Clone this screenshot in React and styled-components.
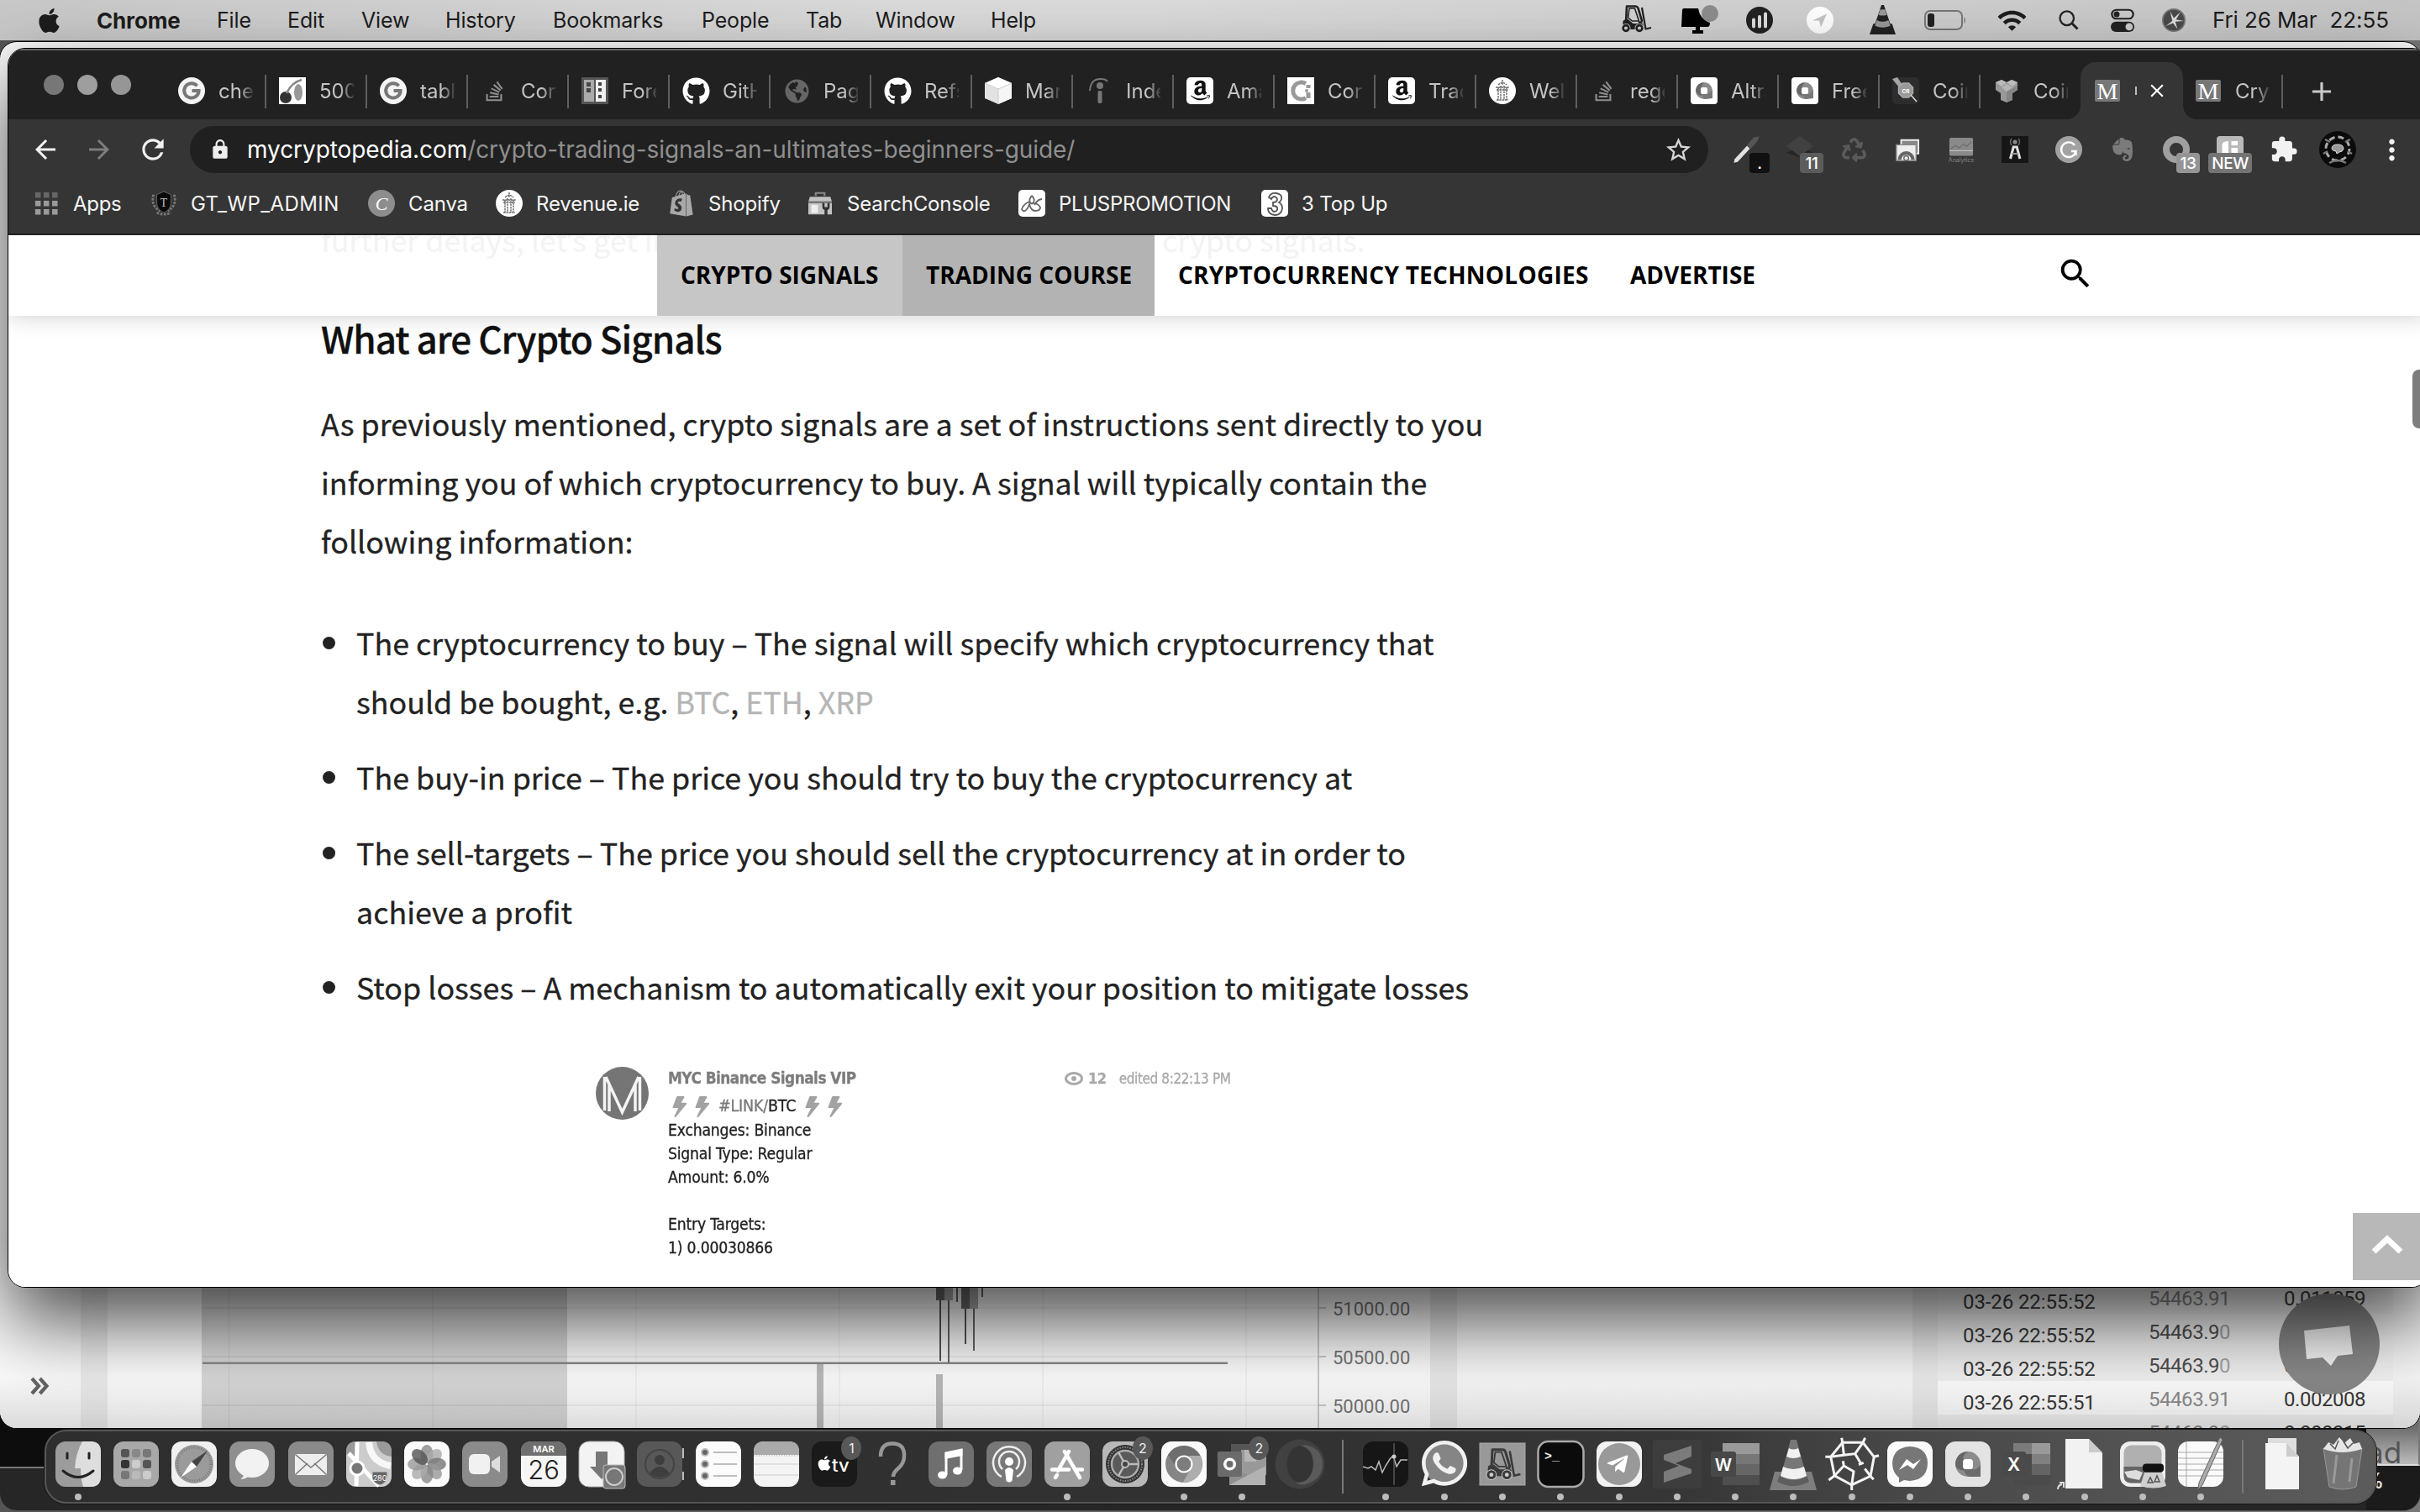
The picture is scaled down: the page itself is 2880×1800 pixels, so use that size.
import React from "react";
import styled, { createGlobalStyle } from "styled-components";
import {
  FaApple, FaGithub, FaAmazon, FaStackOverflow, FaWhatsapp, FaTelegramPlane, FaEvernote,
  FaRecycle, FaShopify, FaGlobeAmericas, FaBolt,
} from "react-icons/fa";
import {
  MdArrowBack, MdArrowForward, MdRefresh, MdLock, MdStarBorder, MdMoreVert, MdClose, MdAdd,
  MdWifi, MdExtension, MdSearch,
} from "react-icons/md";

const UI = `Inter, "Liberation Sans", sans-serif`;
const BODY = `"Noto Sans CJK SC", "Noto Sans", sans-serif`;
const NAV = `"Open Sans", "Noto Sans", sans-serif`;

const Global = createGlobalStyle`
  * { box-sizing: border-box; }
  html, body { margin: 0; background: #111; overflow: hidden; }
  svg { display: block; flex: none; }
`;

const Desktop = styled.div`
  position: relative;
  width: 2880px;
  height: 1800px;
  overflow: hidden;
  background: linear-gradient(90deg, #555 0, #777 100%);
  font-family: ${UI};
`;

/* ---------- menu bar ---------- */
const MenuBar = styled.header`
  display: flex;
  justify-content: space-between;
  align-items: center;
  height: 48px;
  padding: 0 38px 0 42px;
  background: linear-gradient(90deg, #c8c8c8 0, #dadada 38%, #dadada 48%, #cfcfcf 75%, #c5c5c5 100%);
  color: #1d1d1d;
  font-size: 25px;
  letter-spacing: -0.15px;
`;
const MenuGroup = styled.div`
  display: flex;
  align-items: center;
  height: 48px;
`;
const MenuItem = styled.span`
  width: ${(p) => p.$w}px;
  font-weight: ${(p) => (p.$bold ? 700 : 400)};
  font-size: ${(p) => (p.$bold ? 26 : 25)}px;
  white-space: nowrap;
`;
const StatusSlot = styled.span`
  display: flex;
  justify-content: center;
  align-items: center;
  width: ${(p) => p.$w}px;
  color: #1d1d1d;
`;
const Clock = styled.span`
  display: flex;
  gap: 15px;
  margin-left: 20px;
  width: 209px;
  padding-bottom: 2px;
  font-size: 26px;
  letter-spacing: -0.1px;
  white-space: nowrap;
`;

/* ---------- windows ---------- */
const Win = styled.section`
  position: absolute;
  left: ${(p) => p.$x}px;
  top: ${(p) => p.$y}px;
  width: ${(p) => p.$w}px;
  height: ${(p) => p.$h}px;
  border: 1px solid #000;
  border-radius: 21px;
  overflow: hidden;
  display: flex;
  flex-direction: column;
`;
const DeepWin = styled(Win)`
  background: linear-gradient(180deg, #0d0d0d 0, #0d0d0d 98px, #777 98px, #777 100px, #262626 100px);
  border-color: #555;
  align-items: flex-end;
  justify-content: flex-end;
`;
const DeepSide = styled.div`
  width: 64px;
  height: 97px;
  display: flex;
  flex-direction: column;
  justify-content: flex-end;
  padding: 0 0 0 1px;
  background: linear-gradient(180deg, #6b6b6b, #6b6b6b 50px, #bbb);
  color: #555;
  font-size: 35px;
  line-height: 28px;
  border-bottom: 2px solid #ddd;
  border-right: 2px solid #777;
`;
const DeepFoot = styled.div`
  height: 53px;
  width: 64px;
  padding: 5px 0 0 0;
  background: #1b1b1b;
  color: #ddd;
  font-size: 25px;
  font-weight: 600;
  line-height: 26px;
  text-indent: -4px;
`;
const BackWin = styled(Win)`
  background: #fafafa;
  justify-content: flex-end;
`;
const Exchange = styled.div`
  display: flex;
  height: 168px;
`;
const Band = styled.div`
  width: ${(p) => p.$w}px;
  flex: none;
  background: ${(p) => p.$c};
`;
const Rail = styled(Band)`
  padding: 101px 0 0 34px;
`;
const Trades = styled.div`
  width: 542px;
  display: grid;
  grid-auto-rows: 40px;
  font-family: Roboto, sans-serif;
  font-size: 24px;
  line-height: 40px;
  margin-top: -8px;
  height: 176px;
  overflow: hidden;
`;
const Trade = styled.div`
  display: grid;
  grid-template-columns: 221px 161px 130px;
  padding-left: 30px;
  background: ${(p) => p.$bg};
  color: #333;
`;
const TradeCell = styled.span`
  color: ${(p) => p.$c || "#3a3a3a"};
  padding-top: ${(p) => p.$up || 0}px;
  letter-spacing: ${(p) => (p.$tight ? -0.45 : -0.1)}px;
  i { font-style: normal; color: #a5a5a5; }
`;
const Chat = styled.div`
  position: absolute;
  left: 2712px;
  top: 1490px;
  width: 120px;
  height: 120px;
  border-radius: 50%;
  background: #898989;
`;
const DockShade = styled.div`
  position: absolute;
  left: 0;
  bottom: 0;
  width: 100%;
  height: 60px;
  background: linear-gradient(180deg, rgba(0,0,0,0), rgba(0,0,0,.13));
`;
const FrontWin = styled(Win)`
  background: #fff;
  box-shadow: 0 40px 90px rgba(0, 0, 0, 0.7);
`;

/* ---------- browser chrome ---------- */
const TabStrip = styled.div`
  display: flex;
  height: 84px;
  flex: none;
  padding-left: 42px;
  border-top: 2px solid #686868;
  background: #212121;
`;
const Lights = styled.div`
  display: flex;
  gap: 16px;
  width: 145px;
  padding-top: 29px;
`;
const Light = styled.span`
  width: 24px;
  height: 24px;
  border-radius: 50%;
  background: ${(p) => p.$c};
`;
const TabBox = styled.div`
  position: relative;
  display: flex;
  align-items: center;
  width: 120px;
  height: 68px;
  margin-top: 14px;
  padding-left: 15px;
  color: #c4c4c4;
  font-size: 24px;
  border-radius: 18px 18px 0 0;
  background: ${(p) => (p.$active ? "#353535" : "none")};
  ${(p) => p.$active && `
    box-shadow: -1px 0 0 #353535, 1px 0 0 #353535;
    &::before, &::after {
      content: "";
      position: absolute;
      bottom: 0;
      width: 16px;
      height: 16px;
    }
    &::before { left: -17px; background: radial-gradient(circle at 0 0, transparent 15.5px, #353535 16px); }
    &::after { right: -17px; background: radial-gradient(circle at 100% 0, transparent 15.5px, #353535 16px); }
  `}
`;
const Favicon = styled.span`
  display: flex;
  justify-content: center;
  width: 32px;
`;
const NewTab = styled.span`
  display: flex;
  margin: 2px 0 0 12px;
  color: #c9c9c9;
`;
const TabLabel = styled.span`
  width: 41px;
  margin-left: 16px;
  overflow: hidden;
  white-space: nowrap;
  -webkit-mask-image: linear-gradient(90deg, #000 60%, rgba(0, 0, 0, 0.15) 100%);
  mask-image: linear-gradient(90deg, #000 60%, rgba(0, 0, 0, 0.15) 100%);
`;
const TabRule = styled.span`
  width: 2px;
  height: 40px;
  margin-left: auto;
  margin-top: 1px;
  background: #5e5e5e;
`;
const ActiveHint = styled.span`
  width: 2px;
  height: 10px;
  margin: 0 11px 0 17px;
  background: #bbb;
`;
const Toolbar = styled.div`
  display: flex;
  align-items: center;
  height: 72px;
  flex: none;
  padding-left: 12px;
  background: #353535;
`;
const NavButton = styled.span`
  display: flex;
  justify-content: center;
  width: 64px;
  color: ${(p) => (p.$dim ? "#7d7d7d" : "#f1f1f1")};
`;
const Omnibox = styled.div`
  display: flex;
  align-items: center;
  width: 1807px;
  height: 56px;
  margin: 0 13px 0 12px;
  padding: 0 18px 0 23px;
  border-radius: 28px;
  background: #202020;
  color: #fff;
  font-size: 28px;
  letter-spacing: -0.07px;
`;
const Url = styled.span`
  margin-left: 19px;
  flex: 1;
  em { font-style: normal; color: #8f8f8f; }
`;
const Extension = styled.span`
  position: relative;
  display: flex;
  justify-content: center;
  align-items: center;
  width: 64px;
  height: 56px;
`;
const ExtBadge = styled.b`
  position: absolute;
  bottom: 0;
  left: ${(p) => p.$l}px;
  width: ${(p) => p.$w}px;
  height: 24px;
  border-radius: 4px;
  background: ${(p) => p.$c};
  color: #fff;
  text-align: center;
  font-weight: 500;
  font-size: 19px;
  line-height: 26px;
  letter-spacing: -0.5px;
`;
const Bookmarks = styled.div`
  display: flex;
  align-items: center;
  height: 66px;
  flex: none;
  padding: 0 0 8px 29px;
  background: #353535;
  border-bottom: 2px solid #222;
  color: #f5f5f5;
  font-size: 24px;
  letter-spacing: -0.1px;
`;
const Bookmark = styled.span`
  display: flex;
  align-items: center;
  width: ${(p) => p.$w}px;
  letter-spacing: ${(p) => p.$ls || -0.15}px;
  white-space: nowrap;
`;
const BookmarkIcon = styled.span`
  display: flex;
  justify-content: center;
  width: 32px;
  margin-right: 16px;
`;

/* ---------- web page ---------- */
const Page = styled.main`
  position: relative;
  flex: 1;
  overflow: hidden;
  background: #fff;
`;
const SiteNav = styled.nav`
  position: absolute;
  top: 0;
  left: 0;
  right: 0;
  height: 96px;
  display: flex;
  align-items: center;
  padding-left: 772px;
  background: rgba(255, 255, 255, 0.95);
  box-shadow: 0 0 26px rgba(0, 0, 0, 0.2);
`;
const SiteLink = styled.a`
  width: ${(p) => p.$w}px;
  height: 96px;
  padding-left: 28px;
  background: ${(p) => p.$bg || "none"};
  color: #000;
  font: 700 28px/95px ${NAV};
  letter-spacing: ${(p) => p.$ls || 0}px;
  white-space: nowrap;
`;
const SearchButton = styled.span`
  display: flex;
  padding: 0 0 4px 10px;
`;
const Article = styled.article`
  width: 1460px;
  margin-left: 372px;
  color: #222;
  font: 400 35.8px/70px ${BODY};
  -webkit-text-stroke: 0.3px currentColor;
`;
const Lead = styled.p`
  display: flex;
  margin: -31px 0 0;
  white-space: nowrap;
`;
const LeadStart = styled.span`
  width: 1001px;
`;
const Quote = styled.span`
  font-family: "Noto Sans", sans-serif;
  line-height: 1;
`;
const H2 = styled.h2`
  margin: 48px 0 0;
  color: #111;
  font-size: 44px;
  line-height: 70px;
  font-weight: 500;
  letter-spacing: -1px;
  white-space: nowrap;
`;
const Para = styled.p`
  margin: 31px 0 51px;
  white-space: nowrap;
`;
const List = styled.ul`
  margin: 0;
  padding: 0;
  list-style: none;
`;
const Item = styled.li`
  display: flex;
  margin-bottom: 20px;
  white-space: nowrap;
`;
const Bullet = styled.span`
  width: 15px;
  height: 15px;
  margin: 29px 25px 0 2px;
  border-radius: 50%;
  background: #222;
`;
const Coin = styled.span`
  color: #b5b5b5;
`;
const Shot = styled.figure`
  display: flex;
  margin: 0 0 0 327px;
  padding-top: 41px;
  color: #222;
  font: 400 19.2px/28px "DejaVu Sans Condensed", "DejaVu Sans", sans-serif;
  font-stretch: condensed;
  letter-spacing: -0.2px;
  filter: blur(0.6px);
`;
const ShotText = styled.div`
  width: 472px;
  margin-left: 23px;
  white-space: nowrap;
`;
const ShotName = styled.div`
  color: #7c7c7c;
  font-weight: 700;
  font-size: 18.8px;
  letter-spacing: -0.5px;
  margin-bottom: 4px;
`;
const ShotPair = styled.div`
  display: flex;
  align-items: center;
  height: 30px;
  font-size: 19.5px;
  span { color: #777; margin-left: 6px; }
  b { font-weight: 400; margin-right: 6px; }
`;
const BoltBox = styled.i`
  display: flex;
  justify-content: center;
  width: 27px;
  color: #a2a2a2;
  transform: skewX(-14deg);
`;
const ShotMeta = styled.div`
  display: flex;
  align-items: center;
  height: 28px;
  gap: 6px;
  color: #a8a8a8;
  font-size: 17px;
  letter-spacing: -0.4px;
  white-space: nowrap;
  b { margin-right: 9px; font-size: 18px; }
`;
const ScrollThumb = styled.div`
  position: absolute;
  top: 160px;
  right: 3px;
  width: 16px;
  height: 70px;
  border-radius: 8px;
  background: #7d7d7d;
`;
const ToTop = styled.button`
  position: absolute;
  left: 2790px;
  bottom: 8px;
  width: 90px;
  height: 80px;
  border: 0;
  padding: 0 0 6px 22px;
  background: #b8b8b8;
`;

/* ---------- dock ---------- */
const Dock = styled.footer`
  position: absolute;
  left: 53px;
  top: 1702px;
  width: 2775px;
  height: 88px;
  display: flex;
  padding-left: 3px;
  border: 2px solid #565656;
  border-radius: 26px;
  background: linear-gradient(90deg, #2e2e2e 0, #323232 55%, #363636 70%, #484848 80%, #555 92%, #5c5c5c 100%);
  box-shadow: 0 0 0 1px #151515;
`;
const Slot = styled.div`
  position: relative;
  display: flex;
  flex-direction: column;
  align-items: center;
  width: 69.27px;
  padding-top: 12px;
`;
const RunDot = styled.i`
  width: 8px;
  height: 8px;
  margin-top: 8px;
  border-radius: 50%;
  background: #bcbcbc;
`;
const DockRule = styled.i`
  width: 2px;
  height: 64px;
  margin: 10px ${(p) => p.$m}px 0;
  background: #777;
`;
const Count = styled.b`
  position: absolute;
  top: 6px;
  left: 43px;
  width: 24px;
  height: 28px;
  border-radius: 50%;
  background: #585858;
  color: #eee;
  font-weight: 400;
  font-size: 16px;
  line-height: 28px;
  text-align: center;
`;

const Svg = ({ s = 32, h, box = 32, children }) => (
  <svg width={s} height={h || s} viewBox={`0 0 ${box} ${box * (h || s) / s}`} overflow="visible" fill="none">{children}</svg>
);

/* shared drawings */
const Forklift = ({ s, c = "#222" }) => (
  <Svg s={s} box={36}>
    <path d="M6 21L7 1.500h10.500q2 0 3 2.200l4.300 14.300q.5 4-4 2.500" stroke={c} strokeWidth="2.600" strokeLinejoin="round" />
    <path d="M10 4l-1.500 11 5 4h8L16.500 4z" stroke={c} strokeWidth="1.600" />
    <path d="M25 3l4.500 25.500 6.500-1.500" stroke={c} strokeWidth="2.200" />
    <path d="M2.500 19q2-2.500 6-2l6 5h12v7H2z" fill={c} />
    <circle cx="6" cy="27.500" r="5.500" fill="#ccc" /><circle cx="22" cy="27.500" r="5.500" fill="#ccc" />
    <circle cx="6" cy="27.500" r="3.400" stroke={c} strokeWidth="2.600" /><circle cx="22" cy="27.500" r="3.400" stroke={c} strokeWidth="2.600" />
  </Svg>
);
const Cone = ({ s, h, c = "#222", m = "#999" }) => (
  <Svg s={s} h={h} box={32}>
    <path d="M4.500 23h23L32 36H0z" fill={c} />
    <path d="M14.500 0h3L26 25q-10 4-20 0z" fill={c} />
    <path d="M13 5.500h6l2 6.500q-5 2-10 0zM9 18.500q7 4 14 0l2.500 7q-9.500 4-19 0z" fill={m} />
  </Svg>
);
const Harp = ({ s = 32 }) => (
  <Svg s={s}>
    <circle cx="16" cy="16" r="16" fill="#fff" />
    <path d="M16 3v6M11 9q5-5 10 0M8 12h16M9 15h14M11 12v15M14 10v17M18 10v17M21 12v15M9 27h14" stroke="#666" strokeWidth="1.400" strokeDasharray="2.500 .8" />
  </Svg>
);

const fav = {
  google: (
    <Svg>
      <circle cx="16" cy="16" r="16" fill="#f4f4f4" />
      <path d="M22.500 10.200A8.700 8.700 0 1 0 24.600 16H16.500" stroke="#777" strokeWidth="4" />
    </Svg>
  ),
  cherry: (
    <Svg>
      <path d="M0 0h32v32H0z" fill="#fff" />
      <circle cx="8" cy="24" r="7" fill="#333" /><ellipse cx="23" cy="18" rx="5" ry="10" fill="#999" />
      <path d="M9 19Q15 6 27 3" stroke="#888" strokeWidth="2.500" />
    </Svg>
  ),
  stack: <FaStackOverflow size={27} color="#8e8e8e" />,
  forex: (
    <Svg>
      <path d="M0 0h32v32H0z" fill="#555" /><path d="M3 3h12v26H3z" fill="#aaa" /><path d="M17 3h12v26H17z" fill="#eee" />
      <path d="M6 6h5v5H6zM6 13h5v5H6zM20 6h4v4h-4zM20 13h4v4h-4zM20 21h4v4h-4z" fill="#444" />
    </Svg>
  ),
  github: <FaGithub size={33} color="#fff" />,
  globe: <FaGlobeAmericas size={29} color="#666" />,
  cube: (
    <Svg>
      <path d="M16 0l16 7v18l-16 7L0 25V7z" fill="#e2e2e2" /><path d="M16 0l16 7-16 7L0 7z" fill="#fff" /><path d="M16 14l16-7v18l-16 7z" fill="#f6f6f6" />
      <path d="M0 7l16 7 16-7M16 14v18" stroke="#ccc" />
    </Svg>
  ),
  indeed: (
    <Svg>
      <circle cx="17" cy="10" r="4" fill="#777" /><rect x="14.500" y="16" width="5" height="15" rx="2" fill="#777" />
      <path d="M5 16Q6 1 19 2q5 0 7 3" stroke="#777" strokeWidth="2" />
    </Svg>
  ),
  amazon: (
    <Svg><rect width="32" height="32" rx="5" fill="#fff" /><foreignObject x="3" y="2" width="27" height="29"><FaAmazon size={27} color="#111" /></foreignObject></Svg>
  ),
  commons: (
    <Svg>
      <path d="M0 0h32v32H0z" fill="#fff" />
      <path d="M22 7.500A10 10 0 1 0 22 24.500" stroke="#999" strokeWidth="5" /><path d="M25 9v4M25 18v7" stroke="#999" strokeWidth="5" />
      <circle cx="23" cy="16" r="2" fill="#999" />
    </Svg>
  ),
  harp: <Harp />,
  o: (
    <Svg>
      <rect width="32" height="32" rx="4" fill="#fff" /><circle cx="16" cy="16" r="10" fill="#8a8a8a" />
      <path d="M16 6q-5 5-3 9v7q-7-2-7-7Q7 7 16 6z" fill="#666" /><path d="M26 15q-2 5-8 5l-5 0q2 6 5 6l8-1z" fill="#777" />
      <rect x="12" y="12" width="8" height="8" rx="2" fill="#fff" />
    </Svg>
  ),
  coinA: (
    <Svg>
      <rect width="32" height="32" rx="5" fill="#2d2d2d" /><path d="M0 2l6-2 6 9-4 3z" fill="#a5a5a5" />
      <path d="M12.500 7h7l5 5v7l-5 5h-7l-5-5v-7z" fill="#999" stroke="#aaa" strokeWidth="1.500" />
      <text x="16" y="18.500" textAnchor="middle" fontSize="6.500" fontWeight="700" fill="#fff">CR</text>
      <path d="M22 21l7 8" stroke="#ddd" strokeWidth="1.500" />
    </Svg>
  ),
  coinB: (
    <Svg>
      <path d="M3 6l7-3 6 3 6-3 7 3v9l-6 4v8l-7 3-7-3v-8l-6-4z" fill="#999" /><path d="M10 12l6-4 7 4-7 5z" fill="#b5b5b5" /><path d="M16 17v13l7-3v-8l6-4v-5z" fill="#868686" />
      <path d="M3 6l7-3 6 3-6 5zM16 6l6-3 7 3-6 5z" fill="#bbb" />
    </Svg>
  ),
  m: (
    <Svg>
      <rect x="1" y="3" width="30" height="26" rx="2" fill="#777" />
      <text x="16" y="26" textAnchor="middle" fontFamily="Liberation Serif, serif" fontSize="28" fill="#fff">M</text>
    </Svg>
  ),
};

const tabs = [
  ["google", "check"], ["cherry", "500 W"], ["google", "table"], ["stack", "Cont"], ["forex", "Fore"], ["github", "GitHu"],
  ["globe", "Page"], ["github", "Refs"], ["cube", "Mark"], ["indeed", "Index"], ["amazon", "Ama"], ["commons", "Cont"],
  ["amazon", "Trad"], ["harp", "Welc"], ["stack", "rege"], ["o", "Altra"], ["o", "Free"], ["coinA", "Coin"], ["coinB", "Coin"],
  ["m", null], ["m", "Cryp"],
];

const extensions = [
  [<Svg s={36}><path d="M4 26L17 12l3 3L7 29l-4 1z" fill="#e2e2e2" /><path d="M17 11l7-8 6-1-2 5-7 8z" fill="#555" /></Svg>, ".", 36, 24, "#111"],
  [<Svg s={32}><path d="M16 12l16 8-8 8L0 20z" fill="#262626" /><path d="M16 0l16 12-16 12L0 12z" fill="#414141" /></Svg>, "11", 32, 28, "#5c5c5c"],
  [<FaRecycle size={29} color="#5a5a5a" />],
  [<Svg s={30}><path d="M8 4h22v17H8z" fill="#888" stroke="#eee" strokeWidth="2" /><path d="M2 10h25v20H2z" fill="#eee" stroke="#888" strokeWidth="1.500" /><path d="M6 29a8.500 8.500 0 0 1 17 0" stroke="#666" strokeWidth="4.500" /><circle cx="14.500" cy="27" r="3" stroke="#666" strokeWidth="1.500" /></Svg>],
  [<Svg s={30}><rect x="1" y="1" width="30" height="23" rx="2" fill="#8a8a8a" /><path d="M3 15l6-4 4 3 6-5 4 3 6-6" stroke="#6c6c6c" strokeWidth="1.200" /><path d="M1 17.500h30" stroke="#ccc" /><text x="16" y="32" textAnchor="middle" fontSize="7.500" fill="#858585">Analytics</text></Svg>],
  [<Svg s={32}><path d="M0 0h32v32H0z" fill="#161616" /><path d="M10.500 27l3.700-14h4l3.700 14" stroke="#e2e2e2" strokeWidth="3" /><path d="M12 21h8" stroke="#999" strokeWidth="2" /><circle cx="16" cy="7" r="2.600" fill="#888" /><path d="M12 3q-3 4 0 8M20 3q3 4 0 8" stroke="#666" strokeWidth="1.500" /></Svg>],
  [<Svg s={32}><circle cx="16" cy="16" r="16" fill="#a2a2a2" /><path d="M23 11a8.800 8.800 0 1 0 1.500 7H19M24.500 17v6" stroke="#fff" strokeWidth="2.400" /></Svg>],
  [<FaEvernote size={32} color="#7b7b7b" />],
  [<Svg s={32}><circle cx="16" cy="16" r="12" stroke="#a0a0a0" strokeWidth="8" /></Svg>, "13", 32, 28, "#959595"],
  [<Svg s={32}><rect width="32" height="32" rx="4" fill="#b9b9b9" /><path d="M6.500 20V10q1-4 7.500-4v14zM17.500 6H25v5h-7.500zM17.500 14H25v8h-7.500z" fill="#fff" /></Svg>, "NEW", 6, 52, "#747474"],
  [<MdExtension size={34} color="#f2f2f2" />],
  [<Svg s={44} box={44}>
    <circle cx="22" cy="22" r="22" fill="#0b0b0b" /><circle cx="22" cy="21" r="14" stroke="#aaa" strokeWidth="3" strokeDasharray="7 4" />
    <path d="M15 21q0-5 7-5t7 5q-1 4-5 4l-3 2-1-3q-4 0-5-3z" fill="#999" stroke="#ddd" /><path d="M7 10l6 3M37 10l-6 3M5 27l5-3M39 27l-5-3M12 38q10-6 20 0" stroke="#777" strokeWidth="2.500" />
  </Svg>],
  [<MdMoreVert size={39} color="#f2f2f2" />],
];

const Grid9 = (
  <Svg s={28}><g fill="#909090">{[0, 1, 2].map((r) => [0, 1, 2].map((c) => (
    <rect key={r + "-" + c} x={1 + c * 11.500} y={1 + r * 11.500} width="7.500" height="7.500" fill={r ? "#9a9a9a" : "#666"} />)))}</g></Svg>
);
const bookmarks = [
  ["Apps", 140, Grid9, -0.3],
  ["GT_WP_ADMIN", 259, <Svg s={30}><path d="M3 5q-4 14 8 21M29 5q4 14-8 21M7 28q9 4 18 0" stroke="#777" strokeWidth="3" strokeDasharray="3 1.500" /><path d="M16 1l9 4v10q0 9-9 13-9-4-9-13V5z" fill="#0b0b0b" stroke="#666" /><text x="16" y="20" textAnchor="middle" fontFamily="Liberation Serif, serif" fontSize="15" fill="#bbb">T</text></Svg>, 0.4],
  ["Canva", 152, <Svg s={32}><circle cx="16" cy="16" r="16" fill="#8d8d8d" /><text x="16" y="23.500" textAnchor="middle" fontFamily="Liberation Serif, serif" fontStyle="italic" fontSize="22" fill="#fff">C</text></Svg>],
  ["Revenue.ie", 205, <Harp />],
  ["Shopify", 165, <FaShopify size={32} color="#a9a9a9" />],
  ["SearchConsole", 252, <Svg s={28}><path d="M10 6V2h12v4" stroke="#888" strokeWidth="2.500" /><path d="M2 7h28l2 7v17H0V14z" fill="#c2c2c2" /><path d="M0 13h32v3H0z" fill="#777" /><path d="M4 18h9v11H4z" fill="#eee" /><path d="M19 15v6q0 3 3 4v7h4v-7q3-1 3-4v-6l-3 1v5h-4v-5z" fill="#333" /></Svg>],
  ["PLUSPROMOTION", 289, <Svg s={32}><rect width="32" height="32" rx="5" fill="#fff" /><path d="M16 7q-4 4-2 8 2 3 4 0 2-4-2-8M13 14q-7 3-9 9 1 3 4 2 3-2 5-8 2 8 7 8 6 0 6-4-3-6-10-5M19 18q4-7 9-7" stroke="#666" strokeWidth="1.800" /></Svg>, -0.3],
  ["3 Top Up", 180, <Svg s={32}><rect width="32" height="32" rx="5" fill="#fff" /><path d="M9 9q2-6 9-5 7 1 6 7-1 3-3 4 4 2 4 7-1 8-9 8-8-1-8-8h4q1 4 4 4 4-1 3-5-1-2-5-2v-4q4 0 5-3 0-3-3-4-3 0-4 3z" stroke="#555" strokeWidth="1.800" /></Svg>],
];

/* dock drawings on a 54 unit canvas */
const T = ({ c = "#999", r = 12, ...p }) => <rect width="54" height="54" rx={r} fill={c} {...p} />;
const dockLeft = [
  ["finder", <><T c="#9c9c9c" /><path d="M32 0q-8 14-9 32h7q0 12 3 22h9q12 0 12-12V12Q54 0 42 0z" fill="#dedede" /><path d="M14 14v6M40 14v6M9 35q18 15 36 0" stroke="#222" strokeWidth="3" strokeLinecap="round" /></>, 1],
  ["launchpad", <><T c="#a8a8a8" />{["#555", "#888", "#777", "#333", "#ccc", "#555", "#777", "#bbb", "#ccc"].map((c, i) => <rect key={i} x={9 + (i % 3) * 13} y={9 + Math.floor(i / 3) * 13} width="10" height="10" rx="3" fill={c} />)}</>],
  ["safari", <><T c="#f0f0f0" /><circle cx="27" cy="27" r="23" fill="#9b9b9b" /><circle cx="27" cy="27" r="20" stroke="#777" strokeWidth="3" strokeDasharray="1 2" /><path d="M43 11L30 30l-6-6z" fill="#444" /><path d="M11 43l13-19 6 6z" fill="#fff" /></>],
  ["messages", <><T c="#8f8f8f" /><ellipse cx="27" cy="26" rx="20" ry="17" fill="#f2f2f2" /><path d="M17 38q0 5-4 7 7 0 10-4z" fill="#eee" /></>],
  ["mail", <><T c="#8a8a8a" /><rect x="8" y="15" width="38" height="25" rx="3" fill="#eee" /><path d="M9 16l18 15 18-15M9 39l14-13M45 39L31 26" stroke="#777" strokeWidth="1.500" /></>],
  ["maps", <><T c="#ccc" /><path d="M0 12Q0 0 12 0l-1 24L0 15z" fill="#999" /><path d="M13 1l-1 52M3 14l36 39" stroke="#fff" strokeWidth="5" /><path d="M27 1q2 24 26 28" stroke="#f8f8f8" strokeWidth="8" /><path d="M36 0h6q12 0 12 12v6Q38 16 36 0z" fill="#999" /><circle cx="13" cy="32" r="8" fill="#777" stroke="#fff" strokeWidth="3" /><path d="M31 36h18v8q-3 7-9 8-7-2-9-8z" fill="#666" stroke="#ccc" /><text x="40" y="47" textAnchor="middle" fontSize="9" fill="#fff">280</text></>],
  ["photos", <><T c="#fafafa" />{[0, 1, 2, 3, 4, 5, 6, 7].map((i) => <ellipse key={i} cx="27" cy="15" rx="7.500" ry="11" fill={["#888", "#aaa", "#777", "#999", "#888", "#aaa", "#999", "#555"][i]} opacity=".8" transform={`rotate(${i * 45} 27 27)`} />)}</>],
  ["facetime", <><T c="#8b8b8b" /><rect x="8" y="15" width="25" height="24" rx="6" fill="#f1f1f1" /><path d="M35 24l10-7v20l-10-7z" fill="#ddd" /></>],
  ["calendar", <><T c="#f6f6f6" /><path d="M0 17v-5Q0 0 12 0h30q12 0 12 12v5z" fill="#6f6f6f" /><text x="27" y="13" textAnchor="middle" fontSize="11" fontWeight="600" fill="#fff">MAR</text><text x="27" y="45" textAnchor="middle" fontSize="31" fontWeight="300" fill="#222">26</text></>],
  ["install", <><T c="#f3f3f3" stroke="#aaa" /><path d="M20 12h14v18h8L27 45 13 30h7z" fill="#777" /><rect x="29" y="28" width="26" height="28" rx="3" fill="#777" stroke="#bbb" /><circle cx="42" cy="42" r="10" stroke="#ccc" strokeWidth="2" /></>],
  ["contacts", <><T c="#585858" /><path d="M54 8h2v12h-2zM54 36h2v10h-2z" fill="#bbb" /><circle cx="27" cy="27" r="17" stroke="#444" strokeWidth="2" /><circle cx="27" cy="22" r="6" fill="#3e3e3e" /><path d="M15 38q12-16 24 0-12 9-24 0z" fill="#3e3e3e" /></>],
  ["reminders", <><T c="#fbfbfb" />{[13, 27, 41].map((y) => <g key={y}><circle cx="11" cy={y} r="4" fill="#666" stroke="#bbb" strokeWidth="2" /><path d={`M21 ${y}h28`} stroke="#aaa" strokeWidth="1.500" /></g>)}</>],
  ["notes", <><T c="#f4f4f4" /><path d="M0 16v-4Q0 0 12 0h30q12 0 12 12v4z" fill="#aaa" /><path d="M0 17h54" stroke="#999" strokeDasharray="1 2" /><path d="M0 27h54M0 40h54" stroke="#ccc" /></>],
  ["tv", <><T c="#1a1a1a" /><foreignObject x="5" y="16" width="20" height="22"><FaApple size={20} color="#fff" /></foreignObject><text x="24" y="36" fontSize="22" fontWeight="500" fill="#fff">tv</text></>, 0, 1],
  ["help", <><path d="M13 18q0-15.500 14-15.500 15 0 14 15.500 0 8-7 14-6 5-6 10" stroke="#979797" strokeWidth="4.500" /><rect x="25" y="46" width="5.500" height="6" fill="#979797" /></>],
  ["music", <><T c="#6f6f6f" /><path d="M21 40V14l18-4v24" stroke="#fff" strokeWidth="3" /><path d="M19.500 13l21-4v8l-21 4z" fill="#fff" /><ellipse cx="16.500" cy="40" rx="5.500" ry="4.500" fill="#fff" /><ellipse cx="34.500" cy="35" rx="5.500" ry="4.500" fill="#fff" /></>],
  ["podcasts", <><T c="#787878" /><circle cx="27" cy="24" r="5" fill="#fff" /><path d="M22 34q5-6 10 0l-1.500 13q-3.500 3-7 0z" fill="#fff" /><path d="M19 33a12 12 0 1 1 16 0M18 42a19 19 0 1 1 18 0" stroke="#eee" strokeWidth="2.500" /></>],
  ["appstore", <><T c="#a0a0a0" /><path d="M29 12L16 35M24 12l18 31M9 33.500h20M37 33.500h8M15 40l-2 3" stroke="#fff" strokeWidth="4.500" strokeLinecap="round" /></>, 1],
  ["settings", <><T c="#b8b8b8" /><circle cx="27" cy="27" r="23" fill="#333" /><circle cx="27" cy="27" r="20" stroke="#888" strokeWidth="2" strokeDasharray="1.500 1.500" /><circle cx="27" cy="27" r="16" fill="#5a5a5a" stroke="#aaa" strokeWidth="2.500" /><path d="M27 27h16M27 27l-8-14M27 27l-8 14" stroke="#bbb" strokeWidth="2.500" /><circle cx="27" cy="27" r="4" fill="#444" stroke="#bbb" strokeWidth="2" /></>, 0, 2],
  ["chrome", <><T c="#f9f9f9" /><circle cx="27" cy="27" r="22" fill="#858585" /><path d="M8 16Q15 5 27 5t19.500 12H27l-9 14z" fill="#6e6e6e" /><path d="M46.500 17q6 18-7 28-7 5-14 4l10-17-2-15z" fill="#adadad" /><circle cx="27" cy="27" r="9.500" fill="#7d7d7d" stroke="#fff" strokeWidth="2.200" /></>, 1],
  ["outlook", <><path d="M14 3h26v20H14z" fill="#555" /><path d="M26 10h30v30H26z" fill="#999" /><path d="M30 10h14v14H30z" fill="#b5b5b5" /><path d="M12 30l22 10 21-11v23H12z" fill="#8f8f8f" /><path d="M55 29L12 52h43z" fill="#b2b2b2" /><rect x="-2" y="12" width="29" height="30" rx="2" fill="#6b6b6b" /><circle cx="12.500" cy="27" r="5.800" stroke="#fff" strokeWidth="3.600" /></>, 1, 2],
  ["opera", <><circle cx="27" cy="27" r="29.500" fill="#414141" /><path d="M34 4q20 5 20 23T34 51q-6 2-12-2 21-2 21-22T28 6z" fill="#5a5a5a" /><ellipse cx="27" cy="27" rx="15.500" ry="21.500" fill="#343434" /></>],
];
const dockRight = [
  ["activity", <><T c="#161616" /><path d="M0 30l6 2 4-2 5 4 4-10 4 13 4-8 5-8 4-4 4 13 5-8 8 0" stroke="#bbb" strokeWidth="1.500" /><path d="M37 2v50" stroke="#777" /><circle cx="37" cy="18" r="2.500" fill="#ccc" /></>],
  ["whatsapp", <><circle cx="28" cy="26" r="26" fill="#858585" /><foreignObject x="-4" y="-5" width="64" height="64"><FaWhatsapp size={62} color="#f1f1f1" /></foreignObject></>],
  ["forklift", <><rect y="2" width="54" height="50" fill="#999" stroke="#aaa" /><g transform="translate(7 8) scale(1.15)"><Forklift s={36} c="#3a3a3a" /></g></>],
  ["terminal", <><T c="#0b0b0b" stroke="#aaa" strokeWidth="2.500" x=".5" /><text x="8" y="22" fontFamily="Liberation Mono, monospace" fontWeight="700" fontSize="15" fill="#eee">&gt;_</text></>],
  ["telegram", <><T c="#f2f2f2" /><circle cx="27" cy="27" r="25" fill="#999" /><foreignObject x="11" y="13" width="30" height="30"><FaTelegramPlane size={28} color="#fff" /></foreignObject></>],
  ["sublime", <><rect x="-2" y="-2" width="58" height="58" rx="4" fill="#3d3d3d" /><path d="M44 5v13L25 26l19 7v5L11 49V36l18-7-18-7v-6z" fill="#7b7b7b" /></>],
  ["word", <><path d="M12 2h44v50H12z" fill="#666" /><path d="M12 2h44v13H12z" fill="#999" /><path d="M12 15h44v12H12z" fill="#777" /><path d="M12 40h44v12H12z" fill="#4f4f4f" /><rect x="-2" y="12" width="30" height="30" rx="3" fill="#484848" /><text x="13" y="35" textAnchor="middle" fontSize="20" fontWeight="600" fill="#fff">W</text></>],
  ["vlc", <><path d="M5 36h44l6 22H-1z" fill="#7e7e7e" /><path d="M8 48q19 10 38 0l-3-8H11z" fill="#5e5e5e" /><path d="M24-2h7l12 44q-15 8-31 0z" fill="#777" /><path d="M22 8q5 3 11 0l3 10q-9 4-17 0zM15 30q12 6 25 0l3 11q-15 8-31 0z" fill="#f1f1f1" /></>],
  ["web", <g stroke="#f4f4f4" strokeWidth="3">
    <path d="M15.700 1.300H40L53.300 18.300 49 41.300 26.700 51.700 6.300 40.700 1.700 18.300z" />
    <path d="M15.700 1.300l-1-5.600M40 1.300l2.700-5.600M53.300 18.300l5.700-1.600M49 41.300l3.700 4M26.700 51.700V58M6.300 40.700l-7 5.300M1.700 18.300h-6.400" />
    <path d="M1.700 18.300L19 16l11.700-1.300L40 1.300M15.700 1.300L17.300 16M30.700 14.700l6.600 11M35 27.700l5.700-2.400M6.300 40.700l11-11.700-1-5.700M17.300 29L29 35.700l-2.300 16M49 41.300l-6.700-9" />
  </g>],
  ["messenger", <><T c="#fafafa" /><path d="M27 6q21 1 21 20T27 47l-7-1-6 3v-6Q6 37 6 26 7 7 27 6z" fill="#777" /><path d="M14 34l9-13 8 6 9-6-9 12-7-5z" fill="#fff" /></>],
  ["ring", <><T c="#e3e3e3" /><circle cx="27" cy="27" r="15" fill="#8c8c8c" /><path d="M27 12q-9 6-4 12l-1 11q-10-2-10-8 1-14 15-15z" fill="#666" /><path d="M42 27q-3 8-12 6l-8 0q2 9 8 9l12 0z" fill="#6c6c6c" /><rect x="21" y="21" width="12" height="12" rx="3.500" fill="#fff" /></>],
  ["excel", <><path d="M12 2h44v50H12z" fill="#4b4b4b" /><path d="M12 2h22v13H12z" fill="#7b7b7b" /><path d="M34 2h22v13H34z" fill="#9a9a9a" /><path d="M34 15h22v12H34z" fill="#808080" /><path d="M34 27h22v13H34z" fill="#646464" /><rect x="-2" y="12" width="29" height="29" rx="3" fill="#4a4a4a" /><text x="12.500" y="34.500" textAnchor="middle" fontSize="21" fontWeight="600" fill="#fff">X</text></>],
  ["doc", <><path d="M4-3h28l16 17v42H4z" fill="#f2f2f2" /><path d="M32-3v16h16z" fill="#ccc" /><path d="M-5 57q0-5 5-6M-3 49h5v6" stroke="#ddd" strokeWidth="2" /></>],
  ["preview", <><T c="#eee" /><rect x="4.500" y="4.500" width="45" height="45" rx="9" fill="#b0b0b0" /><path d="M4.500 30h45v11q0 8.500-8 8.500H13q-8.500 0-8.500-8.500z" fill="#666" /><path d="M5 36l14-2 8 3-4 9-14-3z" fill="#ddd" /><rect x="27" y="26.500" width="25" height="10" rx="4" fill="#111" /><path d="M29 37h21l5 16q-15 5-31 0z" fill="#cfcfcf" /><path d="M33 49l3-6 3 6zM41 48l3-7 3 7z" stroke="#555" strokeWidth="1.500" /></>],
  ["textedit", <><T c="#fafafa" /><path d="M0 13h54M0 20h54M0 27h54M0 34h54M0 41h54M10 0v54" stroke="#aaa" /><path d="M50-5l3 3-24 54-5 5 1-8z" fill="#aaa" stroke="#666" /></>],
];
const dockEnd = [
  ["files", <><path d="M8-4h34v20H8z" fill="#ddd" /><path d="M5 2h25l15 16v39H5z" fill="#f4f4f4" /><path d="M30 2v16h15z" fill="#ccc" /></>],
  ["trash", <><path d="M4 8h46l-7 46q-16 6-32 0z" fill="#757575" /><path d="M4 8h46l-7 46q-16 6-32 0z" fill="none" stroke="#999" /><path d="M20 16l-4 34M38 20l-3 28" stroke="#999" strokeWidth="3" /><path d="M4 9l6-8 6 3 7-9 6 7 7-6 4 7 7-2 3 8q-23 8-46 0z" fill="#e5e5e5" /><path d="M12 3l6 6 4-10M28 0l5 8 6-6" stroke="#555" strokeWidth="1.500" /></>],
];
const DockItem = ({ d, run }) => (
  <Slot>
    <Svg s={54} box={54}>{d[1]}</Svg>
    {run ? <RunDot /> : null}
    {d[3] ? <Count>{d[3]}</Count> : null}
  </Slot>
);

const menus = [["File", 84], ["Edit", 88], ["View", 100], ["History", 128], ["Bookmarks", 177], ["People", 124], ["Tab", 83], ["Window", 137], ["Help", 60]];

const Bolt = () => <BoltBox><FaBolt size={25} /></BoltBox>;

const trades = [
  ["03-26 22:55:52", "54463.91", "", "0.011059", "#efefef", "#858585"],
  ["03-26 22:55:52", "54463.9", "0", "0.000920", "#f3f3f3", "#505050"],
  ["03-26 22:55:52", "54463.9", "0", "0.001800", "#f1f1f1", "#505050"],
  ["03-26 22:55:51", "54463.91", "", "0.002008", "#fdfdfd", "#8d8d8d"],
  ["", "54463.9", "0", "0.000315", "#f0f0f0", "#858585"],
];

const Chart = () => (
  <svg width="1574" height="168" viewBox="128 1532 1574 168">
    <path d="M128 1532h1574v168H128z" fill="#fcfcfc" />
    <path d="M240 1532h435v168H240z" fill="#d8d8d8" />
    <path d="M272.500 1532v168M515 1532v168M757 1532v168M999 1532v168M1241 1532v168M1483 1532v168" stroke="#000" strokeOpacity=".05" strokeWidth="1.500" />
    <path d="M240 1557h1329M240 1615h1329M240 1673h1329" stroke="#000" strokeOpacity=".05" strokeWidth="2" />
    <path d="M1569 1532v168M1569 1557h9M1569 1615h9M1569 1673h9" stroke="#bbb" strokeWidth="1.500" />
    <path d="M972 1623h8v77h-8zM1114 1636h8v64h-8z" fill="#bbb" />
    <path d="M241 1622.700h1220" stroke="#8a8a8a" strokeWidth="2.500" />
    <path d="M1119 1532v88M1149 1532v68" stroke="#555" strokeWidth="2" />
    <path d="M1129 1532v90M1139 1532v18M1159 1532v76M1169 1532v12" stroke="#666" strokeWidth="2" />
    <path d="M1114 1532h10v16h-10zM1144 1532h10v26h-10z" fill="#6a6a6a" />
    <path d="M1124 1532h10v16h-10zM1154 1532h10v26h-10z" fill="#aaa" />
    <g fontFamily="Roboto, sans-serif" fontSize="22" fill="#757575">
      <text x="1586" y="1566">51000.00</text><text x="1586" y="1624">50500.00</text><text x="1586" y="1682">50000.00</text>
    </g>
  </svg>
);

export default function App() {
  return (
    <Desktop>
      <Global />
      <MenuBar>
        <MenuGroup>
          <MenuItem $w={73}><FaApple size={33} /></MenuItem>
          <MenuItem $w={143} $bold>Chrome</MenuItem>
          {menus.map(([t, w]) => <MenuItem key={t} $w={w}>{t}</MenuItem>)}
        </MenuGroup>
        <MenuGroup>
          <StatusSlot $w={76}><Forklift s={36} /></StatusSlot>
          <StatusSlot $w={76}><Svg s={44} h={34} box={44}><path d="M1 5q0-2 2-2h17q2 13 14 17 0 5-3 5H22v4h4v4H13v-4h4v-4H0z" fill="#000" /><circle cx="34" cy="9" r="10" fill="#8c8c8c" /></Svg></StatusSlot>
          <StatusSlot $w={66}><Svg s={32}><circle cx="16" cy="16" r="16" fill="#222" /><path d="M9 23.500v-8M16 23.500V12M23 23.500V8.500" stroke="#ddd" strokeWidth="4" strokeLinecap="round" /></Svg></StatusSlot>
          <StatusSlot $w={78}><Svg s={32}><circle cx="16" cy="16" r="16" fill="#fff" /><path d="M7 16.500L24 8.500l-7 16-2-8z" fill="#c4c4c4" /></Svg></StatusSlot>
          <StatusSlot $w={70}><Cone s={31} h={36} /></StatusSlot>
          <StatusSlot $w={80}><Svg s={50} h={24} box={50}><rect x="1" y="1" width="44" height="22" rx="6" stroke="#777" strokeWidth="2" /><rect x="4" y="4" width="8" height="16" rx="3" fill="#222" /><path d="M47.500 8q3 4 0 8z" fill="#777" /></Svg></StatusSlot>
          <StatusSlot $w={78}><MdWifi size={37} /></StatusSlot>
          <StatusSlot $w={58}><Svg s={24}><circle cx="13" cy="13" r="11" stroke="#222" strokeWidth="3" /><path d="M21 21l9 9" stroke="#222" strokeWidth="4" /></Svg></StatusSlot>
          <StatusSlot $w={70}><Svg s={28}><rect x="1.500" y="2" width="29" height="12" rx="6" stroke="#222" strokeWidth="2.500" /><circle cx="8" cy="8" r="4" fill="#222" /><rect y="18" width="32" height="14" rx="7" fill="#222" /><circle cx="25" cy="25" r="5" fill="#ccc" /></Svg></StatusSlot>
          <StatusSlot $w={52}><Svg s={28}><circle cx="16" cy="16" r="15" fill="#4a4a4a" stroke="#777" strokeWidth="2" /><path d="M14 17L11 4l5 9 9-8-6 10 11 2-12 1 3 10-6-8-10 4z" fill="#ddd" /></Svg></StatusSlot>
          <Clock><span>Fri 26 Mar</span><span>22:55</span></Clock>
        </MenuGroup>
      </MenuBar>

      <DeepWin $x={-1} $y={1647} $w={2882} $h={152}>
        <DeepSide>ad</DeepSide>
        <DeepFoot>%</DeepFoot>
      </DeepWin>

      <BackWin $x={-1} $y={49} $w={2882} $h={1652}>
        <Exchange>
          <Rail $w={96} $c="#fafafa">
            <Svg s={26} h={34} box={26}><path d="M4 8l8 9-8 9M13.500 8l8 9-8 9" stroke="#666" strokeWidth="4.200" /></Svg>
          </Rail>
          <Band $w={32} $c="#ececec" />
          <Chart />
          <Band $w={32} $c="#e9e9e9" />
          <Band $w={542} $c="#f8f8f8" />
          <Band $w={30} $c="#ebebeb" />
          <Trades>
            {trades.map((t, i) => (
              <Trade key={i} $bg={t[4]}>
                <TradeCell $up={6}>{t[0]}</TradeCell>
                <TradeCell $up={2} $tight $c={t[5]}>{t[1]}<i>{t[2]}</i></TradeCell>
                <TradeCell $up={2} $tight>{t[3]}</TradeCell>
              </Trade>
            ))}
          </Trades>
          <Band $w={32} $c="#f4f4f4" />
        </Exchange>
        <Chat>
          <Svg s={120} box={120}><path d="M30 44l54-6 4 34-18 2-8 12-10-10-19 2z" fill="#f4f4f4" /></Svg>
        </Chat>
        <DockShade />
      </BackWin>

      <FrontWin $x={9} $y={57} $w={2882} $h={1476}>
        <TabStrip>
          <Lights><Light $c="#777" /><Light $c="#9e9e9e" /><Light $c="#969696" /></Lights>
          {tabs.map(([k, label], i) => (
            <TabBox key={i} $active={!label}>
              <Favicon>{fav[k]}</Favicon>
              {label ? <TabLabel>{label}</TabLabel> : <><ActiveHint /><MdClose size={26} color="#fff" /></>}
              {i !== 18 && i !== 19 && <TabRule />}
            </TabBox>
          ))}
          <TabBox><NewTab><MdAdd size={38} /></NewTab></TabBox>
        </TabStrip>
        <Toolbar>
          <NavButton><MdArrowBack size={36} /></NavButton>
          <NavButton $dim><MdArrowForward size={36} /></NavButton>
          <NavButton><MdRefresh size={38} /></NavButton>
          <Omnibox>
            <MdLock size={26} color="#eee" />
            <Url>mycryptopedia.com<em>/crypto-trading-signals-an-ultimates-beginners-guide/</em></Url>
            <MdStarBorder size={35} color="#d5d5d5" />
          </Omnibox>
          {extensions.map(([icon, badge, l, w, c], i) => (
            <Extension key={i}>{icon}{badge && <ExtBadge $l={l} $w={w} $c={c}>{badge}</ExtBadge>}</Extension>
          ))}
        </Toolbar>
        <Bookmarks>
          {bookmarks.map(([t, w, icon, ls]) => <Bookmark key={t} $w={w} $ls={ls}><BookmarkIcon>{icon}</BookmarkIcon>{t}</Bookmark>)}
        </Bookmarks>
        <Page>
          <Article>
            <Lead><LeadStart>further delays, let<Quote>’</Quote>s get into</LeadStart><span>crypto signals.</span></Lead>
            <H2>What are Crypto Signals</H2>
            <Para>
              As previously mentioned, crypto signals are a set of instructions sent directly to you<br />
              informing you of which cryptocurrency to buy. A signal will typically contain the<br />
              following information:
            </Para>
            <List>
              <Item><Bullet /><div>The cryptocurrency to buy – The signal will specify which cryptocurrency that<br />should be bought, e.g. <Coin>BTC</Coin>, <Coin>ETH</Coin>, <Coin>XRP</Coin></div></Item>
              <Item><Bullet /><div>The buy-in price – The price you should try to buy the cryptocurrency at</div></Item>
              <Item><Bullet /><div>The sell-targets – The price you should sell the cryptocurrency at in order to<br />achieve a profit</div></Item>
              <Item><Bullet /><div>Stop losses – A mechanism to automatically exit your position to mitigate losses</div></Item>
            </List>
            <Shot>
              <Svg s={63} box={63}><circle cx="31.500" cy="31.500" r="31.500" fill="#757575" /><path d="M12 12l19.500 42L51 12M10.500 12v40M16 20v33M47 20v33M52.500 12v40" stroke="#f4f4f4" strokeWidth="3.500" /></Svg>
              <ShotText>
                <ShotName>MYC Binance Signals VIP</ShotName>
                <ShotPair><Bolt /><Bolt /><span>#LINK/</span><b>BTC</b><Bolt /><Bolt /></ShotPair>
                Exchanges: Binance<br />Signal Type: Regular<br />Amount: 6.0%<br /><br />Entry Targets:<br />1) 0.00030866
              </ShotText>
              <ShotMeta>
                <Svg s={22} box={22}><ellipse cx="11" cy="11" rx="9.500" ry="6.500" stroke="#aaa" strokeWidth="3" /><circle cx="11" cy="11" r="3" fill="#aaa" /></Svg>
                <b>12</b><span>edited 8:22:13 PM</span>
              </ShotMeta>
            </Shot>
          </Article>
          <SiteNav>
            <SiteLink $w={292} $bg="#c6c6c6">CRYPTO SIGNALS</SiteLink>
            <SiteLink $w={300} $bg="#b3b3b3">TRADING COURSE</SiteLink>
            <SiteLink $w={538} $ls={0.25}>CRYPTOCURRENCY TECHNOLOGIES</SiteLink>
            <SiteLink $w={525}>ADVERTISE</SiteLink>
            <SearchButton><MdSearch size={46} color="#000" /></SearchButton>
          </SiteNav>
          <ScrollThumb />
          <ToTop><Svg s={38} h={24} box={38}><path d="M3 21L19 6l16 15" stroke="#fff" strokeWidth="7" /></Svg></ToTop>
        </Page>
      </FrontWin>

      <Dock>
        {dockLeft.map((d) => <DockItem key={d[0]} d={d} run={d[2]} />)}
        <DockRule $m={15.500} />
        {dockRight.map((d) => <DockItem key={d[0]} d={d} run />)}
        <DockRule $m={14} />
        {dockEnd.map((d) => <DockItem key={d[0]} d={d} />)}
      </Dock>
    </Desktop>
  );
}
